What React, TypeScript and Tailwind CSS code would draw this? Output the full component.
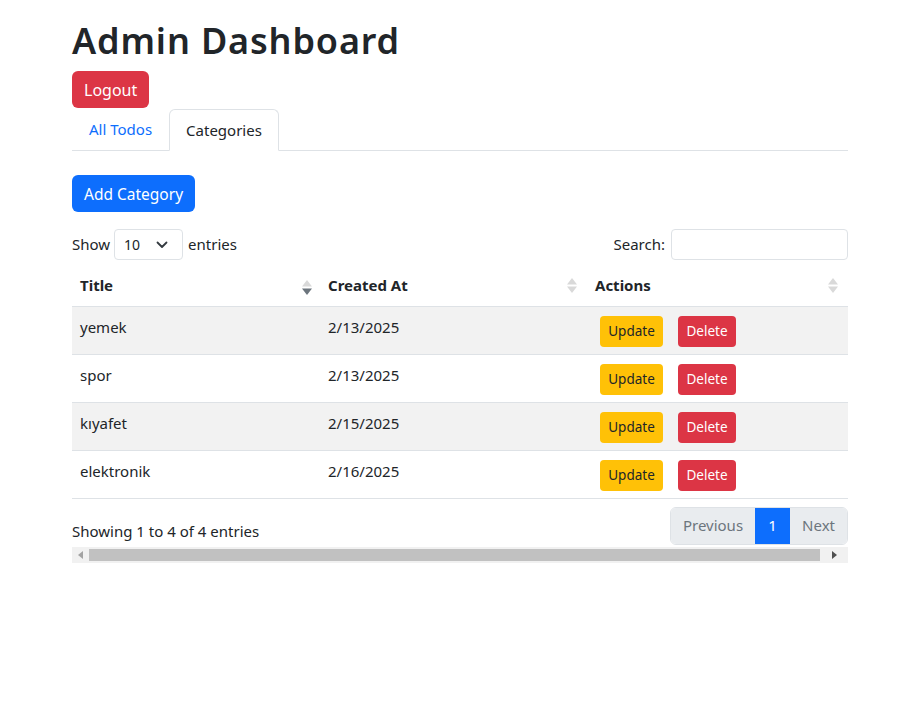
import React from "react";

const rows = [
  { title: "yemek", date: "2/13/2025" },
  { title: "spor", date: "2/13/2025" },
  { title: "kıyafet", date: "2/15/2025" },
  { title: "elektronik", date: "2/16/2025" },
];

function SortIcon({ active }: { active?: boolean }) {
  return (
    <svg width="10" height="15" viewBox="0 0 10 15" className="shrink-0">
      <polygon points="5,0 10,6.5 0,6.5" fill="#d9d9d9" />
      <polygon points="0,8.5 10,8.5 5,15" fill={active ? "#6c757d" : "#d9d9d9"} />
    </svg>
  );
}

export default function App() {
  return (
    <div
      className="bg-white min-h-[704px] text-[#212529] text-[16px]"
      style={{ fontFamily: '"Noto Sans", "Open Sans", sans-serif' }}
    >
      <div className="ml-[72px] w-[776px] pt-[19px]">
        <h1 className="text-[36px] font-semibold leading-[43px] tracking-[0.85px]">Admin Dashboard</h1>
        <div className="mt-[9px]">
          <button className="h-[37px] px-[12px] rounded-[6px] bg-[#dc3545] text-white text-[16px] leading-[24px]">
            Logout
          </button>
        </div>
        <div className="mt-[1px] flex border-b border-[#dee2e6] h-[42px]">
          <div className="h-[41px] px-[17px] flex items-center text-[#0d6efd] text-[15px]">All Todos</div>
          <div className="h-[42px] px-[16px] flex items-center border border-[#dee2e6] border-b-white rounded-t-[6px] bg-white text-[15px] -mb-px">
            Categories
          </div>
        </div>
        <div className="mt-[24px]">
          <button className="h-[37px] px-[12px] rounded-[6px] bg-[#0d6efd] text-white text-[15.5px] leading-[24px]">
            Add Category
          </button>
        </div>
        <div className="mt-[17px] flex items-center justify-between h-[31px] text-[15px]">
          <div className="flex items-center">
            <span>Show</span>
            <div className="ml-[4px] mr-[5px] w-[69px] h-[31px] border border-[#dee2e6] rounded-[4px] flex items-center justify-between pl-[9px] pr-[14px] text-[14px]">
              <span>10</span>
              <svg width="12" height="8" viewBox="0 0 12 8">
                <path d="M1.5 1.5 L6 6 L10.5 1.5" fill="none" stroke="#343a40" strokeWidth="1.8" strokeLinecap="round" strokeLinejoin="round" />
              </svg>
            </div>
            <span>entries</span>
          </div>
          <div className="flex items-center">
            <span className="mr-[6px]">Search:</span>
            <div className="w-[177px] h-[31px] border border-[#dee2e6] rounded-[4px]" />
          </div>
        </div>
        <table className="mt-[10px] w-full border-collapse text-[15px]">
          <thead>
            <tr className="h-[36px] border-b border-[#dee2e6]">
              <th className="w-[248px] text-left font-bold pl-[8px] pr-[8px] align-top pt-[4px]">
                <div className="flex items-center justify-between">
                  <span>Title</span>
                  <span className="mt-[4px]"><SortIcon active /></span>
                </div>
              </th>
              <th className="w-[267px] text-left font-bold pl-[8px] pr-[10px] align-top pt-[4px]">
                <div className="flex items-center justify-between">
                  <span>Created At</span>
                  <SortIcon />
                </div>
              </th>
              <th className="text-left font-bold pl-[8px] pr-[10px] align-top pt-[4px]">
                <div className="flex items-center justify-between">
                  <span>Actions</span>
                  <SortIcon />
                </div>
              </th>
            </tr>
          </thead>
          <tbody>
            {rows.map((r, i) => (
              <tr
                key={r.title}
                className={`h-[48px] border-b border-[#dee2e6] ${i % 2 === 0 ? "bg-[#f2f2f2]" : "bg-white"}`}
              >
                <td className="pl-[8px] align-top pt-[9px]">{r.title}</td>
                <td className="pl-[8px] align-top pt-[9px]">{r.date}</td>
                <td className="pl-[13px] align-top pt-[9px]">
                  <div className="flex gap-[15px]">
                    <button className="w-[63px] h-[31px] rounded-[4px] bg-[#ffc107] text-[#212529] text-[13.5px]">
                      Update
                    </button>
                    <button className="w-[58px] h-[31px] rounded-[4px] bg-[#dc3545] text-white text-[13.5px]">
                      Delete
                    </button>
                  </div>
                </td>
              </tr>
            ))}
          </tbody>
        </table>
        <div className="mt-[8px] flex items-end justify-between">
          <div className="text-[15px] mb-[2px]">Showing 1 to 4 of 4 entries</div>
          <div className="flex h-[38px] rounded-[6px] border border-[#dee2e6] overflow-hidden text-[15px]">
            <div className="px-[12px] bg-[#e9ecef] text-[#6c757d] flex items-center">Previous</div>
            <div className="w-[35px] bg-[#0d6efd] text-white flex items-center justify-center">1</div>
            <div className="px-[12px] bg-[#e9ecef] text-[#6c757d] flex items-center">Next</div>
          </div>
        </div>
        <div className="mt-[2px] h-[16px] bg-[#f1f1f1] flex items-center">
          <div className="w-[17px] flex items-center justify-center">
            <svg width="5" height="8" viewBox="0 0 5 8"><polygon points="5,0 5,8 0,4" fill="#a3a3a3" /></svg>
          </div>
          <div className="h-[12px] w-[731px] bg-[#c1c1c1]" />
          <div className="flex-1 flex items-center justify-center">
            <svg width="5" height="8" viewBox="0 0 5 8"><polygon points="0,0 5,4 0,8" fill="#505050" /></svg>
          </div>
        </div>
      </div>
    </div>
  );
}
